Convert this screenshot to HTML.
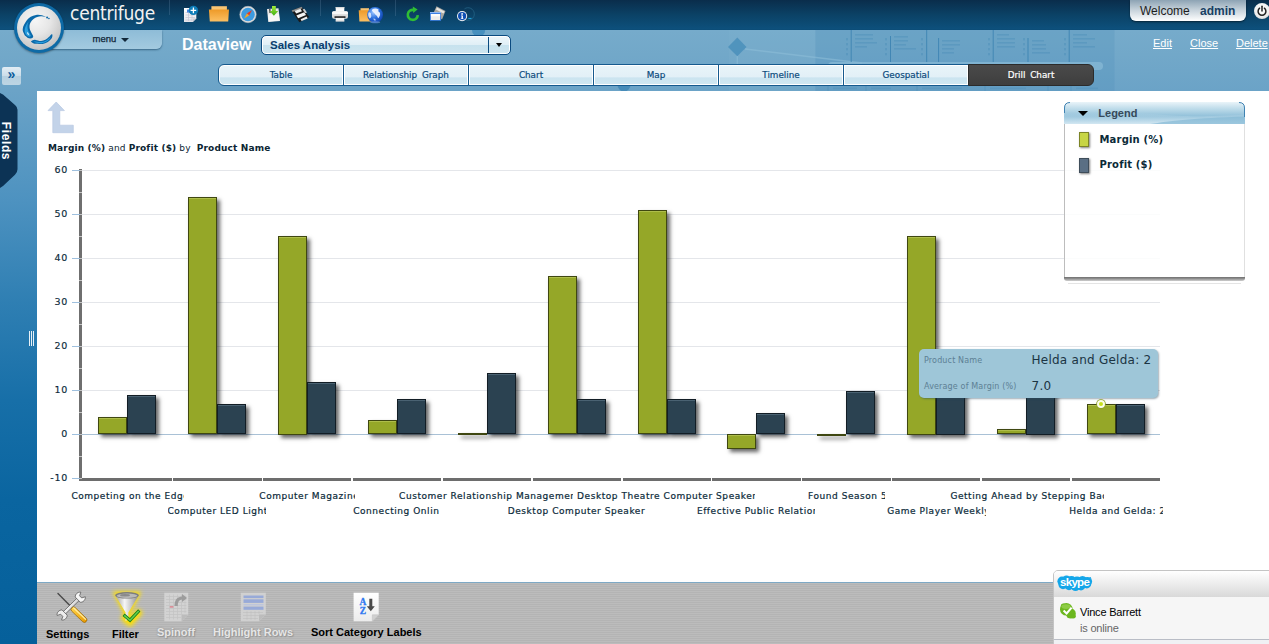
<!DOCTYPE html>
<html lang="en">
<head>
<meta charset="utf-8">
<title>Centrifuge - Dataview - Sales Analysis</title>
<style>
html,body{margin:0;padding:0;}
body{width:1269px;height:644px;overflow:hidden;position:relative;background:#fff;font-family:"Liberation Sans",sans-serif;}
.abs{position:absolute;}
#top{position:absolute;left:0;top:0;width:1269px;height:30px;background:linear-gradient(to bottom,#0a2d4b 0%,#0b4266 50%,#0d507c 97%,#0b4a74 100%);}
#band{position:absolute;left:0;top:30px;width:1269px;height:61px;background:linear-gradient(to bottom,#76abcb 0%,#72a8c9 40%,#6ba3c7 100%);overflow:hidden;}
#side{position:absolute;left:0;top:91px;width:37px;height:553px;background:linear-gradient(to bottom,#6ba3c7 0%,#4d92c0 20%,#2f7fb3 38%,#176fa8 56%,#0a65a0 74%,#05609b 100%);}
#logo{position:absolute;left:14px;top:3px;width:50px;height:50px;border-radius:50%;background:#0e6aa6;box-shadow:0 1px 2px rgba(0,0,0,.35);}
#logo i{position:absolute;left:3px;top:3px;width:44px;height:44px;border-radius:50%;background:radial-gradient(circle at 42% 32%,#f6f6f6 0%,#e6e6e6 38%,#c6c6c6 74%,#a2a2a2 100%);}
#brand{position:absolute;left:70px;top:-1px;font-family:"DejaVu Sans Condensed","DejaVu Sans","Liberation Sans",sans-serif;font-stretch:condensed;font-weight:normal;font-size:19px;color:#f2f2f2;letter-spacing:-.25px;line-height:28px;}
#menu{position:absolute;left:40px;top:30px;width:122px;height:19px;border-radius:0 0 6px 0;background:linear-gradient(to bottom,#8ebcd7,#a3cae0);box-shadow:0 1px 2px rgba(10,50,80,.55);}
#menu span{position:absolute;left:52.5px;top:2px;font-size:9.5px;color:#0f2436;line-height:13px;-webkit-text-stroke:.25px #0f2436;}
#menu b{position:absolute;left:81px;top:8px;width:0;height:0;border-left:4px solid transparent;border-right:4px solid transparent;border-top:4px solid #12283a;}
.vdiv{position:absolute;top:0;width:1px;height:16px;background:rgba(130,165,195,.22);}
#dv{position:absolute;left:182px;top:35px;font-size:16px;font-weight:bold;color:#fff;line-height:20px;}
#combo{position:absolute;left:261px;top:35px;width:248px;height:18px;border:1px solid #0b4b80;border-radius:5px;box-shadow:inset 0 0 0 1px #fff;background:linear-gradient(to bottom,#eff7fb 0%,#e0eff6 48%,#c7e2ee 52%,#cde5f0 100%);}
#combo span{position:absolute;left:8px;top:2px;font-size:11.5px;font-weight:bold;color:#0a3e6e;line-height:14px;}
#combo i{position:absolute;left:226.3px;top:1px;width:1px;height:16px;background:#0b4b80;}
#combo b{position:absolute;left:234.3px;top:7px;width:0;height:0;border-left:3.5px solid transparent;border-right:3.5px solid transparent;border-top:4px solid #000;}
.tab{position:absolute;top:64px;width:124px;height:20px;border:1px solid #165a8e;box-shadow:inset 0 0 0 1px #fff;background:linear-gradient(to bottom,#e8f4f9 0%,#e2f0f7 60%,#cbe4f0 64%,#d0e7f1 100%);font-family:"DejaVu Sans","Liberation Sans",sans-serif;font-size:8.8px;word-spacing:2px;color:#0a4a7c;text-align:center;line-height:20px;-webkit-text-stroke:.2px #0a4a7c;}
.tab.sel{-webkit-text-stroke:.2px #fff;background:linear-gradient(to bottom,#4a4a4a,#3e3e3e);border-color:#2b2b2b;box-shadow:none;color:#fff;border-radius:0 6px 6px 0;}
#welcome{position:absolute;left:1130px;top:0;width:116px;height:21px;border-radius:0 0 6px 6px;background:linear-gradient(to bottom,#8da3b4 0%,#c4d0d9 45%,#ffffff 100%);box-shadow:0 1px 2px rgba(0,0,0,.5);}
#welcome span{position:absolute;left:10px;top:4px;font-size:12px;color:#1d1d1d;line-height:14px;}
#welcome b{position:absolute;left:70px;top:4px;font-size:12px;color:#173f63;line-height:14px;}
#power{position:absolute;left:1254px;top:3px;width:16px;height:16px;border-radius:50%;background:radial-gradient(circle at 50% 40%,#fff 0%,#f0f0f0 55%,#c8c8c8 100%);}
.lnk{position:absolute;top:36px;font-size:11px;color:#fff;text-decoration:underline;line-height:14px;}
#expand{position:absolute;left:2px;top:67px;width:19px;height:18px;border-radius:2px;background:linear-gradient(to bottom,#e2edf4,#cbdde9 50%,#b6d0e0 52%,#bdd5e4);color:#0e5b9b;font-size:14px;font-weight:bold;line-height:15px;text-align:center;}
#fields{position:absolute;left:0;top:93px;width:18px;height:95px;}
#fieldstxt{position:absolute;left:-17.3px;top:134px;width:46px;height:14px;transform:rotate(90deg);font-size:12px;font-weight:bold;color:#fff;text-align:center;line-height:14px;letter-spacing:.6px;}
#grip{position:absolute;left:29px;top:331px;width:5px;height:15px;background:repeating-linear-gradient(to right,#e8f1f7 0,#e8f1f7 1px,transparent 1px,transparent 2px);}
#ctitle{position:absolute;left:48px;top:142px;letter-spacing:.15px;font-family:"DejaVu Sans","Liberation Sans",sans-serif;font-size:9px;color:#0b2533;line-height:12px;white-space:nowrap;}
.gl{position:absolute;left:82px;width:1078px;height:1px;}
.tk{position:absolute;left:72px;width:8px;height:1px;background:#9fc0de;}
.yl{position:absolute;left:30px;width:38px;height:14px;text-align:right;font-family:"DejaVu Sans","Liberation Sans",sans-serif;font-size:9.5px;line-height:14px;color:#0b2a3a;letter-spacing:.75px;-webkit-text-stroke:.15px #0b2a3a;}
#yaxis{position:absolute;left:79px;top:169px;width:3px;height:312px;background:repeating-linear-gradient(to bottom,#6f6f6f 0,#6f6f6f 1px,#c4c4c4 1px,#c4c4c4 2px,#6f6f6f 2px,#6f6f6f 22px);}
.xa{position:absolute;top:478px;height:3px;background:#6d6d6d;}
.bar{position:absolute;box-sizing:border-box;}
.bm{background:#95a728;border:1px solid #3f4711;box-shadow:3px 3px 4px rgba(0,0,0,.6),inset 0 1px 0 #aebd4a;}
.bp{background:#2b4251;border:1px solid #121d25;box-shadow:3px 3px 4px rgba(0,0,0,.6),inset 0 1px 0 #4a6272;}
.xl{position:absolute;-webkit-text-stroke:.2px #0b2a3a;height:14px;overflow:hidden;text-align:left;font-family:"DejaVu Sans","Liberation Sans",sans-serif;font-size:9px;line-height:14px;color:#0b2a3a;letter-spacing:.55px;white-space:nowrap;}
#legend{position:absolute;left:1064px;top:102px;width:179px;height:175px;background:rgba(255,255,255,.86);border-left:1px solid #bdbdbd;border-right:1px solid #e0e0e0;border-radius:6px 6px 0 0;}
#lshadow{position:absolute;left:-1px;top:175px;width:181px;height:4px;border-radius:0 0 3px 3px;background:linear-gradient(to bottom,#6f6f6f 0%,#8d8d8d 40%,#cfcfcf 100%);}
#lshadow2{position:absolute;left:3px;top:181px;width:173px;height:1px;background:#e4e4e4;}
#lhead{position:absolute;left:-1px;top:0;width:181px;height:22px;}
#lhead b{position:absolute;left:14px;top:9px;width:0;height:0;border-left:5px solid transparent;border-right:5px solid transparent;border-top:5px solid #000;}
#lhead span{position:absolute;left:34.3px;top:4px;font-size:11px;font-weight:bold;color:#36495a;line-height:14px;}
.sw{position:absolute;left:14.3px;width:8px;height:13px;border:1px solid #6c7320;box-shadow:1px 1px 2px rgba(0,0,0,.5);}
.ll{position:absolute;left:34.5px;letter-spacing:.17px;font-family:"DejaVu Sans","Liberation Sans",sans-serif;font-size:10px;font-weight:bold;color:#0b2a38;line-height:14px;white-space:nowrap;}
#tip{position:absolute;left:919px;top:349px;width:238.5px;height:48.5px;border-radius:5px;background:#9ec6d8;box-shadow:1px 1px 2px rgba(40,70,90,.45);font-family:"DejaVu Sans","Liberation Sans",sans-serif;}
#tip .k{position:absolute;left:5px;font-size:8px;letter-spacing:.15px;color:#5d8094;line-height:10px;white-space:nowrap;}
#tip .v{position:absolute;left:112.5px;font-size:12px;letter-spacing:.25px;color:#1b3443;line-height:16px;white-space:nowrap;}
#marker{position:absolute;left:1097px;top:400px;width:4.4px;height:4.4px;border-radius:50%;border:2px solid #fbfde8;background:#c6e01c;box-shadow:0 0 0 .8px #8c9c22;}
#bbar{position:absolute;left:37px;top:582px;width:1232px;height:62px;background:repeating-linear-gradient(to bottom,#bcbcbc 0,#bcbcbc 1px,#b4b4b4 1px,#b4b4b4 2px);border-top:1px solid #7ea9c5;box-sizing:border-box;}
.bl{position:absolute;font-size:11px;font-weight:bold;color:#000;line-height:14px;white-space:nowrap;}
.bl.dis{color:#e6e6e6;text-shadow:0 0 2px #8a8a8a,1px 1px 1px #9a9a9a;}
#skype{position:absolute;left:1053px;top:570px;width:230px;height:80px;border:1px solid #c4c4c4;border-radius:5px 0 0 0;background:#f6f6f6;box-sizing:border-box;}
#skhead{position:absolute;left:0;top:0;width:100%;height:26px;background:linear-gradient(to bottom,#ffffff 0%,#ececec 50%,#d9d9d9 100%);border-radius:4px 0 0 0;}
#skype .n{position:absolute;left:26px;top:34px;font-size:11px;color:#000;line-height:14px;letter-spacing:-.2px;}
#skype .s{position:absolute;left:26px;top:50px;font-size:11px;color:#666;line-height:14px;letter-spacing:-.2px;}
</style>
</head>
<body>
<div id="top"></div>
<div id="band">
  <svg class="abs" style="left:0;top:0" width="1269" height="61" viewBox="0 30 1269 61">
    <rect x="815.5" y="30" width="299" height="61" fill="#4f90bb" opacity=".26"/>
    <rect x="729" y="30" width="86" height="61" fill="#8dbcd7" opacity=".12"/>
    <path d="M472 30 A6.6 6.6 0 0 0 485.2 30 Z" fill="#428dbd" opacity=".9"/>
    <polygon points="737.3,37.5 746.5,46.9 737.3,56.3 728,46.9" fill="#4a8fbb" opacity=".85"/>
    <line x1="745" y1="49" x2="862" y2="63" stroke="#8fbfd9" stroke-width="1.6" opacity=".55"/>
    <line x1="737.3" y1="56" x2="737.3" y2="66" stroke="#8fbfd9" stroke-width="1.4" opacity=".5"/>
    <g stroke="#3d84b3" stroke-width="1" opacity=".9"><line x1="851.2" y1="30" x2="851.2" y2="62"/><line x1="890.5" y1="36" x2="890.5" y2="62"/><line x1="926.7" y1="30" x2="926.7" y2="62"/><line x1="938.6" y1="38" x2="938.6" y2="62"/><line x1="993.2" y1="30" x2="993.2" y2="62"/><line x1="1028" y1="38" x2="1028" y2="62"/><line x1="1069.2" y1="30" x2="1069.2" y2="62"/></g>
    <g fill="#4b8eb9" opacity=".42"><rect x="855" y="34" width="18" height="1.6"/><rect x="855" y="38" width="18" height="1.6"/><rect x="855" y="42" width="22" height="1.6"/><rect x="855" y="46" width="12" height="1.6"/><rect x="894" y="36" width="14" height="1.6"/><rect x="894" y="40" width="14" height="1.6"/><rect x="894" y="44" width="12" height="1.6"/><rect x="894" y="48" width="22" height="1.6"/><rect x="942" y="40" width="18" height="1.6"/><rect x="942" y="44" width="18" height="1.6"/><rect x="942" y="48" width="12" height="1.6"/><rect x="942" y="52" width="12" height="1.6"/><rect x="997" y="34" width="12" height="1.6"/><rect x="997" y="38" width="18" height="1.6"/><rect x="997" y="42" width="18" height="1.6"/><rect x="997" y="46" width="18" height="1.6"/><rect x="1032" y="40" width="12" height="1.6"/><rect x="1032" y="44" width="14" height="1.6"/><rect x="1032" y="48" width="14" height="1.6"/><rect x="1032" y="52" width="18" height="1.6"/><rect x="1073" y="34" width="14" height="1.6"/><rect x="1073" y="38" width="22" height="1.6"/><rect x="1073" y="42" width="14" height="1.6"/><rect x="1073" y="46" width="22" height="1.6"/><rect x="846" y="38" width="2" height="2.4"/><rect x="846" y="43" width="2" height="2.4"/><rect x="846" y="48" width="2" height="2.4"/><rect x="846" y="53" width="2" height="2.4"/><rect x="885" y="38" width="2" height="2.4"/><rect x="885" y="43" width="2" height="2.4"/><rect x="885" y="48" width="2" height="2.4"/><rect x="885" y="53" width="2" height="2.4"/><rect x="921" y="38" width="2" height="2.4"/><rect x="921" y="43" width="2" height="2.4"/><rect x="921" y="48" width="2" height="2.4"/><rect x="921" y="53" width="2" height="2.4"/><rect x="988" y="38" width="2" height="2.4"/><rect x="988" y="43" width="2" height="2.4"/><rect x="988" y="48" width="2" height="2.4"/><rect x="988" y="53" width="2" height="2.4"/><rect x="1023" y="38" width="2" height="2.4"/><rect x="1023" y="43" width="2" height="2.4"/><rect x="1023" y="48" width="2" height="2.4"/><rect x="1023" y="53" width="2" height="2.4"/><rect x="1064" y="38" width="2" height="2.4"/><rect x="1064" y="43" width="2" height="2.4"/><rect x="1064" y="48" width="2" height="2.4"/><rect x="1064" y="53" width="2" height="2.4"/></g>
    <rect x="828" y="62" width="275" height="8" rx="4" fill="#86b8d5" opacity=".8"/>
    <circle cx="624" cy="85" r="6.5" fill="#3f86b5" opacity=".8"/>
    <g stroke="#4b8eb9" stroke-width="1" opacity=".55"><line x1="828" y1="86" x2="828" y2="91"/><line x1="866" y1="86" x2="866" y2="91"/><line x1="917" y1="86" x2="917" y2="91"/><line x1="985" y1="86" x2="985" y2="91"/><line x1="1048" y1="86" x2="1048" y2="91"/><line x1="1071" y1="86" x2="1071" y2="91"/></g>
    <g fill="#4b8eb9" opacity=".35"><rect x="833" y="87.5" width="24" height="1.6"/><rect x="871" y="87.5" width="20" height="1.6"/><rect x="922" y="87.5" width="40" height="1.6"/><rect x="990" y="87.5" width="36" height="1.6"/><rect x="1076" y="87.5" width="22" height="1.6"/></g>
    
  </svg>
</div>
<div id="side"></div>

<!-- header pieces -->
<div id="menu"><span>menu</span><b></b></div>
<div id="logo"><i></i>
  <svg class="abs" style="left:3.5px;top:3.5px" width="42" height="42" viewBox="17.5 6.5 42 42">
    <path d="M45.5 16.2 C42 14.6 38.5 13.8 35.5 14.4 C31.5 15 28.5 16.8 26.5 19.6 C24.5 22.4 22.4 25.5 22.2 28.8 C22 31 23.2 32.2 23.6 33.6 C24.2 35.4 25.6 36.2 27 37.2 C28.6 38.3 31.2 38.4 32.4 37 C33.4 35.8 32 34.4 31.2 32.8 C30 30.6 28.8 28.6 29 25.6 C29.3 22.6 30.6 20.2 33 18.4 C35.6 16.4 38.6 15.6 41.2 15.8 C42.8 15.9 44 16.6 45.5 16.2 Z" fill="#0a69aa"/>
    <path d="M24.2 29 C24.6 26.5 26 23.5 28 21 C26.8 24 26.6 27 27.6 30 C28.3 32 30 34 30.4 35.6 C29.4 36.6 27.4 36.2 26.2 35 C24.8 33.6 23.9 31.2 24.2 29 Z" fill="#2a9fdf"/>
    <path d="M26.6 31.6 C27.6 32 28.4 33.4 28.6 34.8 C27.4 34.6 26.5 33.2 26.6 31.6 Z" fill="#e8f7ff"/>
    <path d="M30.4 40.9 C31.8 40 33 39.2 35 39.4 C37 39.6 38.4 40.6 40.6 40.4 C43.6 40.2 46.4 38.8 48.4 36.6 C49.6 35.4 50.4 33.8 51.6 33.4 C52.4 35 51.8 37 50.6 38.6 C48.6 41.2 45.6 43 42.2 43.4 C40 43.7 38.2 43 36.4 43.2 C34 43.5 32 42.6 30.4 40.9 Z" fill="#0a69aa"/>
    <path d="M33 41 C35 40.6 37.5 41.8 40.5 41.6 C44 41.4 47.5 39.6 50 36.5 C49.5 39 46.5 41.6 42.5 42.4 C39.5 43 36 42.6 33 41 Z" fill="#2a9fdf"/>
    <circle cx="46.6" cy="17" r="1" fill="#0a69aa"/><circle cx="48.4" cy="18" r=".8" fill="#0a69aa"/>
  </svg>
</div>
<div id="brand">centrifuge</div>

<div class="vdiv" style="left:169px;height:15px"></div>
<div class="vdiv" style="left:320px"></div>
<div class="vdiv" style="left:395px"></div>
<svg class="abs" style="left:178px;top:0" width="302" height="30" viewBox="178 0 302 30">
  <defs>
    <linearGradient id="gFold" x1="0" y1="0" x2="0" y2="1"><stop offset="0" stop-color="#ee9a28"/><stop offset="1" stop-color="#fbbf62"/></linearGradient>
    <linearGradient id="gDoc" x1="0" y1="0" x2="0" y2="1"><stop offset="0" stop-color="#ffffff"/><stop offset="1" stop-color="#e4e4ea"/></linearGradient>
    <radialGradient id="gGlobe" cx=".4" cy=".35" r=".7"><stop offset="0" stop-color="#9cc6ff"/><stop offset=".5" stop-color="#2f74e0"/><stop offset="1" stop-color="#0d40ac"/></radialGradient>
    <linearGradient id="gGreen" x1="0" y1="0" x2="0" y2="1"><stop offset="0" stop-color="#a6ee3a"/><stop offset="1" stop-color="#3fae16"/></linearGradient>
  </defs>
  <!-- new document -->
  <path d="M184 8 H196.3 V18.5 L192.8 22 H184 Z" fill="url(#gDoc)"/>
  <path d="M192.8 22 V18.5 H196.3 Z" fill="#c9c9d2"/>
  <g stroke="#c4c6d4" stroke-width=".7"><line x1="185.5" y1="12.5" x2="195" y2="12.5"/><line x1="185.5" y1="15" x2="195" y2="15"/><line x1="185.5" y1="17.5" x2="195" y2="17.5"/><line x1="185.5" y1="20" x2="192" y2="20"/><line x1="188.5" y1="10" x2="188.5" y2="21"/><line x1="192" y1="12" x2="192" y2="21"/></g>
  <rect x="187" y="9.5" width="4" height="3" fill="#4a86e0"/>
  <circle cx="193.4" cy="10.4" r="4.7" fill="#0d7cb8"/>
  <path d="M193.4 7.6 V13.2 M190.6 10.4 H196.2" stroke="#fff" stroke-width="1.3"/>
  <!-- folder -->
  <path d="M211.4 6.2 H226.9 V11 H211.4 Z" fill="#f8c473"/>
  <path d="M208.9 9.6 H229 L228.2 21.4 H209.8 Z" fill="url(#gFold)"/>
  <!-- compass -->
  <circle cx="248" cy="14.5" r="8.2" fill="#dedede"/>
  <circle cx="248" cy="14.5" r="8.2" fill="none" stroke="#b9bcc0" stroke-width=".6"/>
  <circle cx="248" cy="14.5" r="6.8" fill="#3d9be0"/>
  <path d="M252 10 L249.2 15.6 L246.9 13.4 Z" fill="#e83a22"/>
  <path d="M244.1 18.6 L249.2 15.6 L246.9 13.4 Z" fill="#f5a51e"/>
  <!-- save (disk + green arrow) -->
  <path d="M267 9 L278.5 8.2 L280 21 L268.3 22 Z" fill="#e6e6e6"/>
  <path d="M268 14.5 L278.8 13.8 L279.6 20.6 L268.8 21.4 Z" fill="#f7f7f7"/>
  <path d="M269 9 L270.5 8.9 L270.8 13 L269.3 13.1 Z" fill="#555"/>
  <path d="M272 6 H275.8 V11 H278.2 L273.9 15.8 L269.6 11 H272 Z" fill="url(#gGreen)"/>
  <!-- floppy stack -->
  <polygon points="291.6,10.6 301.6,6.8 309.2,17 299.4,22.2" fill="#1b1b1b"/>
  <polygon points="291.6,10.6 301.6,6.8 302.6,8.2 292.6,12" fill="#8d8d8d"/>
  <polygon points="294.6,10.9 300.4,8.7 302,11.2 296.2,13.5" fill="#efefef"/>
  <polygon points="296.4,15.4 304.2,12.2 306,15 298.2,18.3" fill="#f5f5f5"/>
  <polygon points="300.6,19.2 306.6,16.6 307.6,18.4 301.6,21" fill="#ececec"/>
  <polygon points="302.6,9.4 304.4,8.8 307,12.6 305.2,13.3" fill="#cfcfcf"/>
  <!-- printer -->
  <rect x="335.7" y="7" width="8.6" height="5.5" fill="#fafafa"/>
  <rect x="335.7" y="7" width="8.6" height="1.2" fill="#d9d9d9"/>
  <rect x="332" y="11.3" width="16" height="7.4" rx="2" fill="#d9d9d9"/>
  <rect x="332" y="11.3" width="16" height="3" rx="1.5" fill="#f8f8f8"/>
  <rect x="334.5" y="16.3" width="11" height="1.6" fill="#1a1a1a"/>
  <rect x="335.7" y="17.9" width="8.6" height="3.5" fill="#f6f6f6"/>
  <rect x="335.7" y="20.6" width="8.6" height=".8" fill="#c9c9c9"/>
  <!-- folder + globe -->
  <path d="M360.5 8.2 H369 V11 H360.5 Z" fill="#f8c473"/>
  <path d="M358.7 10.2 H372 V21.4 H359.4 Z" fill="url(#gFold)"/>
  <circle cx="375.1" cy="14.8" r="7.9" fill="url(#gGlobe)"/>
  <path d="M372.2 9.6 C374 8.2 377 8.2 378.8 9.8 C377.6 10.8 378.6 12 379.8 12.6 C380.6 14.4 379.8 16.6 378.4 18.2 C377.2 17.6 377.6 15.8 376.2 15.2 C374.6 14.6 374.8 12.8 373.4 12.2 C372.2 11.6 371.6 10.4 372.2 9.6 Z" fill="#f4f8ff" opacity=".9"/>
  <path d="M368.6 12.4 C370 12 371.4 13.2 371 14.8 C371.8 16.2 371.2 17.8 369.8 18.4 C368.2 17 367.8 14.2 368.6 12.4 Z" fill="#f4f8ff" opacity=".8"/>
  <path d="M373.4 18.6 C374.6 18.2 376 19.2 375.6 20.6 C374.6 21 373.4 20 373.4 18.6 Z" fill="#f4f8ff" opacity=".7"/>
  <ellipse cx="375.2" cy="22.3" rx="5" ry="1" fill="#9fc4ff" opacity=".45"/>
  <!-- refresh -->
  <path d="M417.8 15.2 A5 5 0 1 1 413.6 9.9" fill="none" stroke="#2fbe35" stroke-width="2.6"/>
  <path d="M412.8 6.6 L417.6 9.4 L413.2 13 Z" fill="#2fbe35"/>
  <!-- windows -->
  <path d="M436.5 6.2 L445.5 11 L442 19.5 L433.5 13 Z" fill="#a9a6a0"/>
  <path d="M437 7.5 L444.5 11.4 L443.5 13.6 L436 9.6 Z" fill="#e9e7e2"/>
  <rect x="430" y="12" width="11" height="8.8" fill="#3b7fe3"/>
  <rect x="430.9" y="14" width="9.2" height="6" fill="#ececec"/>
  <rect x="430.9" y="14" width="9.2" height="2.4" fill="#fbfbfb"/>
  <rect x="430" y="12" width="11" height="1" fill="#8fb8f5"/>
  <!-- info -->
  <path d="M464.5 8.8 A6.3 6.3 0 1 1 465.5 19.8" fill="none" stroke="#2a6a8c" stroke-width=".9" opacity=".75"/>
  <rect x="468.3" y="17.9" width="3.2" height="1" fill="#1ea7e0"/>
  <circle cx="462.1" cy="16.1" r="5.1" fill="#f2f2f2"/>
  <circle cx="462.1" cy="16.1" r="4.1" fill="#0f4fb4"/>
  <circle cx="462.1" cy="13.9" r=".9" fill="#fff"/>
  <path d="M461 15.4 H462.9 V18.4 H463.5 V19.1 H460.8 V18.4 H461.5 V16.1 H461 Z" fill="#fff"/>
</svg>


<div id="dv">Dataview</div>
<div id="combo"><span>Sales Analysis</span><i></i><b></b></div>

<div class="tab" style="left:218px;border-radius:6px 0 0 6px">Table</div>
<div class="tab" style="left:343px">Relationship Graph</div>
<div class="tab" style="left:468px">Chart</div>
<div class="tab" style="left:593px">Map</div>
<div class="tab" style="left:718px">Timeline</div>
<div class="tab" style="left:843px">Geospatial</div>
<div class="tab sel" style="left:968px">Drill Chart</div>

<div id="welcome"><span>Welcome</span><b>admin</b></div>
<div id="power">
  <svg class="abs" style="left:0;top:0" width="16" height="16" viewBox="0 0 16 16"><path d="M5.6 5.2 A3.9 3.9 0 1 0 10.4 5.2" fill="none" stroke="#222" stroke-width="1.5" stroke-linecap="round"/><line x1="8" y1="3.2" x2="8" y2="8" stroke="#222" stroke-width="1.5" stroke-linecap="round"/></svg>
</div>
<div class="lnk" style="left:1153px">Edit</div>
<div class="lnk" style="left:1190px">Close</div>
<div class="lnk" style="left:1236px">Delete</div>

<div id="expand">&raquo;</div>
<svg id="fields" viewBox="0 0 18 96" preserveAspectRatio="none"><path d="M0 0 L3 1.5 L15 12 Q17.5 14 17.5 17 L17.5 77 Q17.5 80 15 82.5 L3 94 L0 96 Z" fill="#0c3355"/></svg>
<div id="fieldstxt">Fields</div>
<div id="grip"></div>

<!-- chart -->
<svg class="abs" style="left:46px;top:100px" width="30" height="36" viewBox="46 100 30 36">
  <path d="M56.2 102 L64.4 110.6 L59.8 110.6 L59.8 125.2 L73.3 125.2 L73.3 132.7 L52.8 132.7 L52.8 110.6 L48 110.6 Z" fill="#c3d3e9" stroke="#b7c9e2" stroke-width=".7" stroke-linejoin="round"/>
</svg>
<div id="ctitle"><b>Margin (%)</b> and <b>Profit ($)</b> by &nbsp;<b>Product Name</b></div>
<div id="yaxis"></div>
<div class="gl" style="top:170px;background:#e4e6ea"></div>
<div class="tk" style="top:170px"></div>
<div class="yl" style="top:163px">60</div>
<div class="gl" style="top:214px;background:#e4e6ea"></div>
<div class="tk" style="top:214px"></div>
<div class="yl" style="top:207px">50</div>
<div class="gl" style="top:258px;background:#e4e6ea"></div>
<div class="tk" style="top:258px"></div>
<div class="yl" style="top:251px">40</div>
<div class="gl" style="top:302px;background:#e4e6ea"></div>
<div class="tk" style="top:302px"></div>
<div class="yl" style="top:295px">30</div>
<div class="gl" style="top:346px;background:#e4e6ea"></div>
<div class="tk" style="top:346px"></div>
<div class="yl" style="top:339px">20</div>
<div class="gl" style="top:390px;background:#e4e6ea"></div>
<div class="tk" style="top:390px"></div>
<div class="yl" style="top:383px">10</div>
<div class="gl" style="top:434px;background:#a9c1d6"></div>
<div class="tk" style="top:434px"></div>
<div class="yl" style="top:427px">0</div>
<div class="tk" style="top:478px"></div>
<div class="yl" style="top:471px">-10</div>
<div class="bar bm" style="left:98.4px;top:417.3px;width:29.0px;height:17.2px"></div>
<div class="bar bp" style="left:127.4px;top:395.3px;width:29.0px;height:39.2px"></div>
<div class="bar bm" style="left:188.2px;top:197.3px;width:29.0px;height:237.2px"></div>
<div class="bar bp" style="left:217.2px;top:404.1px;width:29.0px;height:30.4px"></div>
<div class="bar bm" style="left:278.1px;top:236.0px;width:29.0px;height:198.5px"></div>
<div class="bar bp" style="left:307.1px;top:382.1px;width:29.0px;height:52.4px"></div>
<div class="bar bm" style="left:367.9px;top:419.9px;width:29.0px;height:14.6px"></div>
<div class="bar bp" style="left:396.9px;top:399.2px;width:29.0px;height:35.3px"></div>
<div class="bar bm" style="left:457.8px;top:432.7px;width:29.0px;height:1.8px"></div>
<div class="bar bp" style="left:486.8px;top:373.3px;width:29.0px;height:61.2px"></div>
<div class="bar bm" style="left:547.6px;top:275.6px;width:29.0px;height:158.9px"></div>
<div class="bar bp" style="left:576.6px;top:399.2px;width:29.0px;height:35.3px"></div>
<div class="bar bm" style="left:637.5px;top:209.6px;width:29.0px;height:224.9px"></div>
<div class="bar bp" style="left:666.5px;top:399.2px;width:29.0px;height:35.3px"></div>
<div class="bar bm" style="left:727.3px;top:434.0px;width:29.0px;height:14.8px"></div>
<div class="bar bp" style="left:756.3px;top:413.3px;width:29.0px;height:21.2px"></div>
<div class="bar bm" style="left:817.2px;top:434.0px;width:29.0px;height:1.8px"></div>
<div class="bar bp" style="left:846.2px;top:391.3px;width:29.0px;height:43.2px"></div>
<div class="bar bm" style="left:907.0px;top:236.0px;width:29.0px;height:198.5px"></div>
<div class="bar bp" style="left:936.0px;top:390.0px;width:29.0px;height:44.5px"></div>
<div class="bar bm" style="left:996.9px;top:428.7px;width:29.0px;height:5.8px"></div>
<div class="bar bp" style="left:1025.9px;top:390.0px;width:29.0px;height:44.5px"></div>
<div class="bar bm" style="left:1086.8px;top:403.6px;width:29.0px;height:30.9px"></div>
<div class="bar bp" style="left:1115.8px;top:404.1px;width:29.0px;height:30.4px"></div>
<div class="xa" style="left:82.0px;width:89.8px"></div>
<div class="xl" style="left:71.4px;width:112.4px;top:489px">Competing on the Edge</div>
<div class="xa" style="left:173.3px;width:88.3px"></div>
<div class="xl" style="left:167.5px;width:98.9px;top:504px">Computer LED Light</div>
<div class="xa" style="left:263.2px;width:88.3px"></div>
<div class="xl" style="left:259.3px;width:96.2px;top:489px">Computer Magazine</div>
<div class="xa" style="left:353.0px;width:88.3px"></div>
<div class="xl" style="left:353.2px;width:86.1px;top:504px">Connecting Online</div>
<div class="xa" style="left:442.9px;width:88.3px"></div>
<div class="xl" style="left:399.1px;width:173.8px;top:489px">Customer Relationship Management</div>
<div class="xa" style="left:532.8px;width:88.3px"></div>
<div class="xl" style="left:507.8px;width:138.5px;top:504px">Desktop Computer Speaker</div>
<div class="xa" style="left:622.6px;width:88.3px"></div>
<div class="xl" style="left:577.1px;width:177.7px;top:489px">Desktop Theatre Computer Speaker</div>
<div class="xa" style="left:712.4px;width:88.3px"></div>
<div class="xl" style="left:696.9px;width:118.2px;top:504px">Effective Public Relations</div>
<div class="xa" style="left:802.3px;width:88.3px"></div>
<div class="xl" style="left:808.0px;width:76.9px;top:489px">Found Season 5</div>
<div class="xa" style="left:892.1px;width:88.3px"></div>
<div class="xl" style="left:887.2px;width:99.1px;top:504px">Game Player Weekly</div>
<div class="xa" style="left:982.0px;width:88.3px"></div>
<div class="xl" style="left:950.4px;width:153.2px;top:489px">Getting Ahead by Stepping Back</div>
<div class="xa" style="left:1071.8px;width:88.7px"></div>
<div class="xl" style="left:1069.3px;width:93.4px;top:504px">Helda and Gelda: 2</div>

<div id="legend">
  <div id="lhead"><svg class="abs" style="left:0;top:0" width="181" height="22" viewBox="0 0 181 22">
    <defs><linearGradient id="gLh" x1="0" y1="0" x2="0" y2="1"><stop offset="0" stop-color="#eaf4f9"/><stop offset=".3" stop-color="#bfdcea"/><stop offset=".68" stop-color="#8dbed8"/><stop offset="1" stop-color="#9cc7de"/></linearGradient>
    <linearGradient id="gLs" x1="0" y1="0" x2="0" y2="1"><stop offset="0" stop-color="#a9cfe3" stop-opacity=".2"/><stop offset="1" stop-color="#d6e9f3" stop-opacity=".95"/></linearGradient>
    <clipPath id="cLh"><path d="M0 22 V6 Q0 0 6 0 H175 Q181 0 181 6 V22 Z"/></clipPath></defs>
    <g clip-path="url(#cLh)"><rect width="181" height="22" fill="url(#gLh)"/>
    <path d="M0 11 H60 C100 11 110 17 181 12.5 V14.5 C130 16 105 19 86 22 H0 Z" fill="url(#gLs)"/></g>
    <path d="M.5 11 V6 Q.5 .5 6 .5" fill="none" stroke="#3f82b2" stroke-width="1"/>
    <path d="M175 .5 Q180.5 .5 180.5 6 V15" fill="none" stroke="#3f82b2" stroke-width="1"/>
  </svg><b></b><span>Legend</span></div><div id="lshadow"></div><div id="lshadow2"></div>
  <div class="sw" style="top:30px;background:#c7d544;border-color:#7c8426"></div>
  <div class="ll" style="top:31.2px">Margin (%)</div>
  <div class="sw" style="top:56px;background:#5a6f84;border-color:#3f4d5a"></div>
  <div class="ll" style="top:56.2px">Profit ($)</div>
</div>

<div id="tip">
  <div class="k" style="top:6.5px">Product Name</div>
  <div class="v" style="top:3px">Helda and Gelda: 2</div>
  <div class="k" style="top:32.5px">Average of Margin (%)</div>
  <div class="v" style="top:28.5px">7.0</div>
</div>
<div id="marker"></div>

<div id="bbar"></div>
<svg class="abs" style="left:40px;top:584px" width="400" height="44" viewBox="40 584 400 44">
  <defs>
    <linearGradient id="gSil" x1="0" y1="0" x2="1" y2="1"><stop offset="0" stop-color="#ffffff"/><stop offset="1" stop-color="#c8c8c8"/></linearGradient>
    <linearGradient id="gFun" x1="0" y1="0" x2="1" y2="0"><stop offset="0" stop-color="#9c9c9c"/><stop offset=".4" stop-color="#f6f6f6"/><stop offset=".7" stop-color="#c4c4c4"/><stop offset="1" stop-color="#8a8a8a"/></linearGradient>
    <linearGradient id="gHandle" x1="0" y1="0" x2="1" y2="0"><stop offset="0" stop-color="#ffd24a"/><stop offset="1" stop-color="#e89a00"/></linearGradient>
    <filter id="glow" x="-50%" y="-50%" width="200%" height="200%"><feGaussianBlur stdDeviation="2.2"/></filter>
    <linearGradient id="gPage" x1="0" y1="0" x2="0" y2="1"><stop offset="0" stop-color="#ffffff"/><stop offset="1" stop-color="#ececec"/></linearGradient>
  </defs>
  <!-- settings: screwdriver + wrench -->
  <path d="M58 593.6 L71.8 607.6" stroke="#4a4a4a" stroke-width="1.4" stroke-linecap="round"/>
  <g transform="rotate(-44.4 71.2 606.1)">
    <path d="M59 604.5 H83 V607.7 H59 Z" fill="url(#gSil)" stroke="#555" stroke-width=".7"/>
    <path d="M80.4 602.4 C82.4 600.4 86 600.4 87.8 602.9 L84.4 604.6 L84.4 607.6 L87.8 609.3 C86 611.8 82.4 611.8 80.4 609.8 Z" fill="#f6f6f6" stroke="#555" stroke-width=".7"/>
    <path d="M62 602.4 C60 600.4 56.4 600.4 54.6 602.9 L58 604.6 L58 607.6 L54.6 609.3 C56.4 611.8 60 611.8 62 609.8 Z" fill="#ededed" stroke="#555" stroke-width=".7"/>
  </g>
  <g transform="rotate(44 71.5 607.3)">
    <rect x="72" y="604.9" width="20" height="5" rx="2.4" fill="url(#gHandle)" stroke="#8a5a00" stroke-width=".6"/>
    <rect x="73" y="605.6" width="17.5" height="1.3" rx=".6" fill="#fff3b0" opacity=".85"/>
  </g>
  <!-- filter with glow -->
  <g filter="url(#glow)">
    <path d="M112.5 591.5 H141.5 L130 614 V623.5 H124 V614 Z" fill="#ffe000"/>
    <path d="M122.5 615.5 L130 622.5 L140.5 610.5" stroke="#ffe000" stroke-width="7" fill="none"/>
  </g>
  <path d="M115.2 595.3 L125.6 612.5 V621 L128.4 619.2 V612.5 L138.8 595.3 Z" fill="url(#gFun)"/>
  <ellipse cx="127" cy="595.3" rx="11.9" ry="3.3" fill="#7d7d7d"/>
  <ellipse cx="127" cy="595.7" rx="10.3" ry="2.2" fill="#b9b9b9"/>
  <ellipse cx="125" cy="595.2" rx="5" ry="1.2" fill="#8a8a8a"/>
  <path d="M124.8 615.8 L130 620.2 L138.2 611.6" stroke="#1c7d1c" stroke-width="3.2" fill="none" stroke-linecap="square" stroke-linejoin="miter"/>
  <path d="M124.8 615.8 L130 620.2 L138.2 611.6" stroke="#62d24e" stroke-width="1.5" fill="none" stroke-linecap="square" stroke-linejoin="miter"/>
  <!-- spinoff (disabled) -->
  <g opacity=".9">
    <path d="M164.3 592.8 H188.2 V614.5 L181.5 621.2 H164.3 Z" fill="#d6d6d6"/>
    <path d="M181.5 621.2 V614.5 H188.2 Z" fill="#bdbdbd"/>
    <g stroke="#c2c2c2" stroke-width=".6">
      <path d="M166 596.5 H186.5 M166 599.5 H186.5 M166 602.5 H186.5 M166 605.5 H186.5 M166 608.5 H186.5 M166 611.5 H186.5 M166 614.5 H183 M166 617.5 H181"/>
      <path d="M169.5 594.5 V619.5 M173.5 594.5 V619.5 M177.5 594.5 V619.5 M181.5 594.5 V614 M185 594.5 V613"/>
    </g>
    <rect x="169.8" y="606.2" width="3.6" height="1.4" fill="#e07a86"/>
    <path d="M174.5 606 C174.5 599.5 178 596.8 182 596.6 V594 L187 598 L182 602 V599.6 C179.5 599.8 177.8 601.5 177.8 606 Z" fill="#9a9a9a"/>
  </g>
  <!-- highlight rows (disabled) -->
  <g opacity=".9">
    <path d="M240.8 592.8 H265.8 V614.5 L259 621.2 H240.8 Z" fill="#d4d4d4"/>
    <path d="M259 621.2 V614.5 H265.8 Z" fill="#bdbdbd"/>
    <rect x="243.5" y="595.5" width="20" height="2.6" fill="#95a9dc"/>
    <rect x="243.5" y="599.3" width="20" height="3.6" fill="#95a9dc"/>
    <rect x="243.5" y="604.2" width="20" height="1.2" fill="#b9c4e4"/>
    <rect x="243.5" y="606.6" width="20" height="3.2" fill="#95a9dc"/>
    <g stroke="#c0c0c0" stroke-width=".6"><path d="M243 612.5 H263 M243 615.5 H260 M243 618.5 H258 M247 611 V620 M251 611 V620 M255 611 V620 M259 611 V614"/></g>
  </g>
  <!-- sort category labels -->
  <path d="M353.6 592.8 H378.7 V614.8 L372.3 621.2 H353.6 Z" fill="url(#gPage)"/>
  <path d="M372.3 621.2 V614.8 H378.7 Z" fill="#d0d0d0"/>
  <path d="M372.3 621.2 V614.8 H378.7 Z" fill="none" stroke="#bdbdbd" stroke-width=".5"/>
  <text x="359.4" y="605.4" font-family="Liberation Serif,serif" font-weight="bold" font-size="9.5" fill="#2f78f0" stroke="#2f78f0" stroke-width=".3">A</text>
  <text x="359.8" y="613.8" font-family="Liberation Serif,serif" font-weight="bold" font-size="9.5" fill="#2f78f0" stroke="#2f78f0" stroke-width=".3">Z</text>
  <path d="M369.3 598.8 H372.3 V606.3 H374.8 L370.8 611.3 L366.8 606.3 H369.3 Z" fill="#4a4a4a"/>
</svg>

<div class="bl" style="left:46px;top:627px">Settings</div>
<div class="bl" style="left:112px;top:627px">Filter</div>
<div class="bl dis" style="left:157px;top:625px">Spinoff</div>
<div class="bl dis" style="left:213px;top:625px">Highlight Rows</div>
<div class="bl" style="left:311px;top:625px">Sort Category Labels</div>

<div id="skype">
  <div id="skhead"></div>
  <svg class="abs" style="left:3px;top:3px" width="40" height="48" viewBox="1057 574 40 48">
    <g fill="#14a6e9">
      <circle cx="1062" cy="581.2" r="4.6"/><circle cx="1066.5" cy="579.8" r="4.4"/><circle cx="1071.5" cy="581" r="5"/><circle cx="1077" cy="581.5" r="5"/><circle cx="1082.5" cy="581.3" r="5.2"/><circle cx="1087.4" cy="581.6" r="4.7"/>
      <circle cx="1063" cy="584.6" r="4.6"/><circle cx="1069" cy="585.6" r="4.6"/><circle cx="1075.5" cy="586.4" r="4.6"/><circle cx="1081" cy="586" r="4.4"/><circle cx="1086.8" cy="584" r="4.4"/>
      <rect x="1060" y="578" width="29" height="9"/>
    </g>
    <text x="1060" y="586.2" font-family="Liberation Sans,sans-serif" font-weight="bold" font-size="11.5" letter-spacing="-.7" fill="#fff">skype</text>
    <circle cx="1090.2" cy="577.8" r=".8" fill="#14a6e9"/>
    <g fill="#6cb71f">
      <circle cx="1066.3" cy="609.3" r="6.3"/><circle cx="1070.8" cy="613.6" r="5"/><circle cx="1063.4" cy="606" r="2.6"/><circle cx="1073.4" cy="616.2" r="2.4"/>
    </g>
    <ellipse cx="1066" cy="606.6" rx="4.6" ry="2.4" fill="#9bd455" opacity=".7"/>
    <path d="M1063.6 610.6 L1066.6 613.4 L1071.6 607.6" fill="none" stroke="#fff" stroke-width="2.1" stroke-linejoin="miter"/>
</svg>
<div class="abs" style="left:0;top:68px;width:100%;height:1px;background:#b9bdc6"></div>
<div class="abs" style="left:0;top:69px;width:100%;height:10px;background:#f0f1f4"></div>

  <div class="n">Vince Barrett</div>
  <div class="s">is online</div>
</div>
</body>
</html>
